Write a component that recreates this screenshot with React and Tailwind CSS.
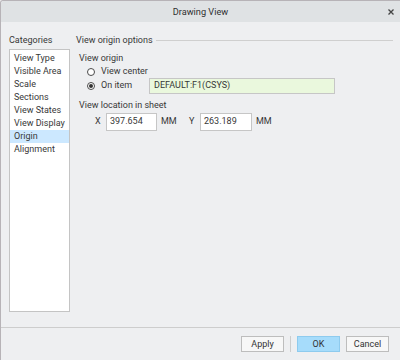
const Radio = ({ checked }) => (
  <span className="w-[8px] h-[8px] rounded-full border border-[#4a4a4a] bg-white flex items-center justify-center shrink-0">
    {checked && <span className="w-[4px] h-[4px] rounded-full bg-[#333]" />}
  </span>
);

const Button = ({ children, primary }) => (
  <button
    className={
      primary
        ? "w-[43px] h-[16px] border border-[#8ecbee] bg-[#a6dcfb] text-[9px] leading-none text-[#333]"
        : "w-[43px] h-[16px] border border-[#bdbdbd] bg-[#f7f7f7] text-[9px] leading-none text-[#333]"
    }
  >
    {children}
  </button>
);

const categories = [
  "View Type",
  "Visible Area",
  "Scale",
  "Sections",
  "View States",
  "View Display",
  "Origin",
  "Alignment",
];

export default function App() {
  return (
    <div className="w-[400px] h-[360px] bg-[#f4f4f4] font-['Roboto',sans-serif] text-[9px] text-[#383838]">
      <div className="h-[360px] flex flex-col bg-[#eeeff1] border-t border-l border-[#b7b3b7] rounded-tl-[3px] overflow-hidden">
        {/* title bar */}
        <div className="h-[21px] shrink-0 bg-[#dfe2e4] flex items-center justify-center relative">
          <span className="text-[9.2px] text-[#303030]">Drawing View</span>
          <svg
            className="absolute right-[6px] top-[8px]"
            width="6"
            height="6"
            viewBox="0 0 6 6"
          >
            <path d="M0.5 0.5L5.5 5.5M5.5 0.5L0.5 5.5" stroke="#444" strokeWidth="1.3" />
          </svg>
        </div>

        {/* body */}
        <div className="h-[305px] shrink-0 flex pl-[8px] pr-[7px] pt-[12px] pb-[15px]">
          <div className="w-[61px] shrink-0 flex flex-col">
            <div className="h-[12px] leading-[12px] mb-[3px]">Categories</div>
            <div className="flex-1 bg-white border border-[#c4c4c4] pt-[2px]">
              {categories.map((c) => (
                <div
                  key={c}
                  className={
                    c === "Origin"
                      ? "h-[13px] leading-[13px] pl-[4px] bg-[#cce8ff]"
                      : "h-[13px] leading-[13px] pl-[4px]"
                  }
                >
                  {c}
                </div>
              ))}
            </div>
          </div>

          <div className="flex-1 ml-[6px] flex flex-col">
            <div className="h-[12px] flex items-center">
              <span className="leading-[12px]">View origin options</span>
              <span className="flex-1 h-px bg-[#cfcfcf] ml-[3px]" />
            </div>

            <div className="pl-[3px] flex flex-col">
              <div className="h-[12px] leading-[12px] mt-[6px]">View origin</div>
              <div className="h-[13px] mt-[1px] flex items-center pl-[8px]">
                <Radio />
                <span className="ml-[6px]">View center</span>
              </div>
              <div className="h-[16px] flex items-center pl-[8px]">
                <Radio checked />
                <span className="ml-[6px] w-[48px]">On item</span>
                <div className="w-[186px] h-[16px] border border-[#c6c6c6] bg-[#eaf8dd] pl-[4px] flex items-center">
                  DEFAULT:F1(CSYS)
                </div>
              </div>

              <div className="h-[12px] leading-[12px] mt-[5px]">View location in sheet</div>
              <div className="h-[18px] mt-[2px] flex items-center pl-[16px]">
                <span className="w-[11px]">X</span>
                <div className="w-[51px] h-[18px] border border-[#c6c6c6] bg-white pl-[3px] flex items-center">
                  397.654
                </div>
                <span className="ml-[4px] w-[28px]">MM</span>
                <span className="w-[11px]">Y</span>
                <div className="w-[52px] h-[18px] border border-[#c6c6c6] bg-white pl-[3px] flex items-center">
                  263.189
                </div>
                <span className="ml-[4px]">MM</span>
              </div>
            </div>
          </div>
        </div>

        {/* footer */}
        <div className="flex-1 border-t border-[#cdcdcd] flex items-start justify-end pt-[8px] pr-[11px]">
          <Button>Apply</Button>
          <span className="w-px h-[16px] bg-[#cdcdcd] mx-[6px]" />
          <Button primary>OK</Button>
          <span className="w-[6px]" />
          <Button>Cancel</Button>
        </div>
      </div>
    </div>
  );
}
